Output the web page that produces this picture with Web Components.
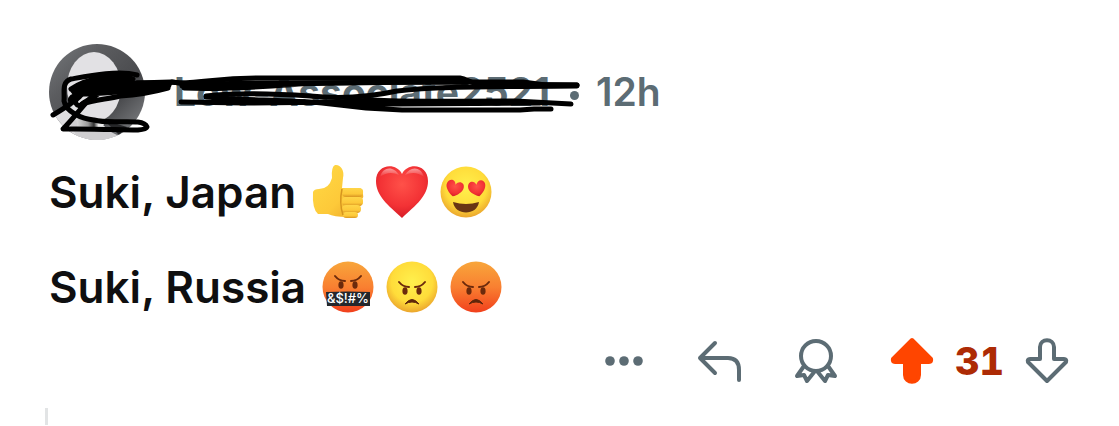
<!DOCTYPE html>
<html lang="en">
<head>
<meta charset="utf-8">
<title>Comment</title>
<style>
body { margin: 0; background: #fff; font-family: Inter, "Liberation Sans", sans-serif; color: #0f0f10; }
</style>
</head>
<body>
<comment-card></comment-card>

<template id="t-card">
<style>
:host { display: block; }
article { padding: 44px 50px 0 49px; }
.body { display: flex; flex-direction: column; gap: 39px; margin-top: 24px; }
.thread { width: 3px; height: 17px; margin: 20px 0 0 45px; background: #e2e4e5; }
</style>
<article>
  <comment-meta><span slot="name">Low-Associate2521</span><span slot="age">12h</span></comment-meta>
  <div class="body">
    <comment-line>Suki, Japan <emoji-icon slot="emoji" kind="thumb"></emoji-icon><emoji-icon slot="emoji" kind="heart"></emoji-icon><emoji-icon slot="emoji" kind="love"></emoji-icon></comment-line>
    <comment-line>Suki, Russia <emoji-icon slot="emoji" kind="curse"></emoji-icon><emoji-icon slot="emoji" kind="angry"></emoji-icon><emoji-icon slot="emoji" kind="rage"></emoji-icon></comment-line>
  </div>
  <comment-actions>31</comment-actions>
</article>
<div class="thread"></div>
</template>

<template id="t-meta">
<style>
:host { display: flex; align-items: center; position: relative; height: 96px; font-size: 39px; line-height: 44px; font-weight: 600; color: #5c6c74; white-space: nowrap; }
.avatar { width: 96px; height: 96px; flex: none; margin-right: 29px; }
a { color: inherit; text-decoration: none; font-weight: 700; }
.dot { width: 9px; height: 9px; border-radius: 50%; background: currentColor; margin: 6px 17px 0 20px; }
.scribble { position: absolute; left: 0; top: 0; width: 540px; height: 96px; overflow: visible; pointer-events: none; }
</style>
<svg class="avatar" viewBox="0 0 96 96" aria-hidden="true">
  <defs>
    <clipPath id="c"><circle cx="48" cy="48" r="48"/></clipPath>
    <linearGradient id="g" x1="0" y1="0" x2="1" y2="1"><stop offset="0" stop-color="#77797c"/><stop offset=".3" stop-color="#5b5c5f"/><stop offset=".65" stop-color="#48494c"/><stop offset="1" stop-color="#8d8f92"/></linearGradient>
    <linearGradient id="s" x1="0" y1="0" x2="1" y2="0"><stop offset="0" stop-color="#ddd"/><stop offset=".4" stop-color="#999"/><stop offset=".6" stop-color="#333"/><stop offset=".75" stop-color="#eee"/></linearGradient>
  </defs>
  <g clip-path="url(#c)">
    <rect width="96" height="96" fill="url(#g)"/>
    <path d="M0 73 20 60 34 74 53 80 70 96H0z" fill="#dedddf"/>
    <ellipse cx="45" cy="43" rx="27" ry="35" fill="#e2e1e4"/>
    <path d="M19 77Q40 73 54 84L70 92 63 96H30z" fill="#cfced0"/>
    <path d="M27 74Q44 80 57 77L52 85H29z" fill="url(#s)"/>
    <path d="M55 76 78 83 70 91z" fill="#252628"/>
  </g>
</svg>
<a href="#user"><slot name="name"></slot></a>
<span class="dot"></span>
<slot name="age"></slot>
<svg class="scribble" viewBox="49 44 540 96" fill="none" stroke="#000" stroke-width="5" stroke-linecap="round" stroke-linejoin="round" aria-hidden="true">
  <path d="M53 115C80 99 85 91 72 97C67 102 74 104 82 94C98 83 117 84 137 83L170 83"/>
  <path d="M137 75C118 70 88 76 71 79C61 82 65 94 64 101C66 112 82 119 94 120C112 125 143 117 147 127C145 133 116 128 63 129C76 116 90 96 101 88"/>
  <path d="M71 89C88 77 118 74 133 79C111 80 80 84 73 91C76 98 110 91 143 91C160 89 170 88 169 84C145 87 111 88 89 88C75 89 80 82 96 86C109 92 94 95 82 104C78 109 71 101 80 95C91 88 103 84 124 85"/>
  <path d="M82 104C94 100 108 99 120 96C136 95 150 93 168 88M75 94C85 85 91 86 101 83C117 80 127 86 143 86"/>
  <path d="M137 83 171 82 180 83C210 82 218 78 260 78L460 78C467 79 470 83 478 84L577 85"/>
  <path d="M182 86C205 92 239 84 280 84L415 82 523 82 545 85 577 85M184 88C234 90 263 86 305 84"/>
  <path d="M172 82C190 85 215 84 250 83L468 82M206 96C240 92 283 94 310 96C338 99 365 98 397 91C439 86 490 87 577 86"/>
  <path d="M206 97C240 100 283 100 322 103L366 108 402 110 520 110 534 109 551 109M181 102 245 103 340 102 373 100C402 102 445 101 515 101L571 104M337 103 400 104 540 103"/>
</svg>
</template>

<template id="t-line">
<style>
:host { display: flex; align-items: center; font-size: 44px; line-height: 56px; font-weight: 600; }
p { margin: 0; white-space: pre; }
.emoji { display: flex; gap: 12px; margin-left: 5px; }
</style>
<p><slot></slot></p><div class="emoji"><slot name="emoji"></slot></div>
</template>

<template id="t-actions">
<style>
:host { display: flex; justify-content: flex-end; align-items: center; margin-top: 19px; height: 54px; color: #5c6c74; }
button { display: block; border: 0; padding: 0; background: none; color: inherit; cursor: pointer; }
svg { display: block; width: 46px; height: 48px; fill: none; stroke: currentColor; stroke-width: 4; stroke-linecap: round; stroke-linejoin: round; }
.tools { display: flex; gap: 50px; margin-right: 50px; }
.votes { display: flex; align-items: center; gap: 20px; margin-right: -1px; }
.score { font-size: 38px; line-height: 44px; font-weight: 800; color: #ad2b05; font-variant-numeric: tabular-nums; }
.up { color: #ff4500; }
</style>
<div class="tools">
  <button aria-label="More"><svg viewBox="0 0 46 48"><g fill="currentColor" stroke="none"><circle cx="9" cy="24" r="4.8"/><circle cx="23" cy="24" r="4.8"/><circle cx="37" cy="24" r="4.8"/></g></svg></button>
  <button aria-label="Reply"><svg viewBox="0 0 46 48"><path d="M18 6 3 21 18 36M3 21H31Q42 21 42 33V43"/></svg></button>
  <button aria-label="Award"><svg viewBox="0 0 46 48"><circle cx="23" cy="19" r="15"/><path d="M11 29 4 39 11 38 14 44 22 34M35 29 42 39 35 38 32 44 24 34"/></svg></button>
</div>
<div class="votes">
  <button class="up" aria-label="Upvote"><svg viewBox="0 0 46 48"><path fill="currentColor" d="M23 3 4 22Q3 25 6 25H16V38C16 47 30 47 30 38V25H40Q43 25 42 22Z"/></svg></button>
  <span class="score"><slot></slot></span>
  <button aria-label="Downvote"><svg viewBox="0 0 46 48"><path d="M23 44 4 25Q3 22 6 22H16V10C16 1 30 1 30 10V22H40Q43 22 42 25Z"/></svg></button>
</div>
</template>

<script>
const defs = `<defs>
<radialGradient id="yr" cx=".5" cy=".4" r=".62"><stop offset="0" stop-color="#fff04d"/><stop offset=".65" stop-color="#ffdc3a"/><stop offset="1" stop-color="#e9a02c"/></radialGradient>
<linearGradient id="o" x1="0" y1="0" x2="0" y2="1"><stop offset="0" stop-color="#f8a63b"/><stop offset=".5" stop-color="#f98031"/><stop offset="1" stop-color="#f1401c"/></linearGradient>
<radialGradient id="h" cx=".5" cy=".35" r=".7"><stop offset="0" stop-color="#ff5149"/><stop offset=".6" stop-color="#f33235"/><stop offset="1" stop-color="#cf1723"/></radialGradient>
<linearGradient id="hi" x1="0" y1="0" x2="0" y2="1"><stop offset="0" stop-color="#fff" stop-opacity=".5"/><stop offset="1" stop-color="#fff" stop-opacity="0"/></linearGradient>
<linearGradient id="t" x1="0" y1="0" x2="1" y2="1"><stop offset="0" stop-color="#ffda45"/><stop offset=".6" stop-color="#fdc939"/><stop offset="1" stop-color="#e9a227"/></linearGradient>
<linearGradient id="f" x1="0" y1="0" x2="0" y2="1"><stop offset="0" stop-color="#ffd548"/><stop offset=".65" stop-color="#fdc839"/><stop offset="1" stop-color="#d99522"/></linearGradient></defs>`;
const brows = y => `<g transform="translate(0 ${y})"><path d="M13 18Q17 23 23 23M39 18Q35 23 29 23" fill="none" stroke="#6b2a0c" stroke-width="2" stroke-linecap="round"/><ellipse cx="19" cy="27" rx="2.6" ry="3.8" fill="#6b2a0c"/><ellipse cx="33" cy="27" rx="2.6" ry="3.8" fill="#6b2a0c"/></g>`;
const frown = '<path d="M19 43Q26 34 33 43Q26 39 19 43Z" fill="#5f260b" stroke="#5f260b" stroke-linejoin="round"/>';
const face = fill => `<circle cx="26" cy="26" r="25.5" fill="url(#${fill})"/>`;
const eye = 'M0 7C-5 4-9 0-8-4C-7-9-1-9 0-4C2-9 8-8 8-3C8 1 4 5 0 7Z';
const art = {
  thumb: `<path d="M1 26Q2 23 7 23Q17 23 20 12Q19 1 23-1C28-2 33 4 31 12L30 22H46Q52 22 51 28Q52 31 50 33Q52 38 48 40Q49 45 45 47Q43 52 35 51Q22 51 16 48H6Q0 43 1 26Z" fill="url(#t)"/><g fill="url(#f)"><rect x="30" y="22" width="21" height="9" rx="4"/><rect x="30" y="31" width="21" height="9" rx="4"/><rect x="30" y="39" width="19" height="8" rx="4"/><rect x="31" y="46" width="15" height="6" rx="3"/></g><path d="M30 23Q27 37 31 49" fill="none" stroke="#d6951f" stroke-width="1.5"/>`,
  heart: '<path d="M26 52C12 39 0 30 0 15C0-2 20-4 26 8C32-4 52-2 52 15C52 30 40 39 26 52Z" fill="url(#h)"/><path d="M4 11C7 0 18 0 23 9Q13 4 4 11ZM48 11C45 0 34 0 29 9Q39 4 48 11Z" fill="url(#hi)"/>',
  love: face('yr') + `<g fill="url(#h)"><path transform="translate(14.5 23) rotate(14) scale(1.08)" d="${eye}"/><path transform="translate(37.5 23) rotate(-14) scale(1.08)" d="${eye}"/></g><path d="M13 36Q26 40 39 36C37 50 15 50 13 36Z" fill="#693614"/>`,
  curse: face('o') + brows(-3) + '<path d="M4 31Q26 30 48 31V45H5Z" fill="#24272c"/><text x="26" y="42" text-anchor="middle" font-family="Inter, sans-serif" font-size="13" font-weight="500" fill="#fff">&amp;$!#%</text>',
  angry: face('yr') + brows(3) + frown,
  rage: face('o') + brows(3) + frown
};
function define(name, id) {
  customElements.define(name, class extends HTMLElement {
    constructor() {
      super();
      this.attachShadow({ mode: 'open' }).append(document.getElementById(id).content.cloneNode(true));
    }
  });
}
customElements.define('emoji-icon', class extends HTMLElement {
  connectedCallback() {
    if (this.shadowRoot) return;
    this.attachShadow({ mode: 'open' }).innerHTML = `<style>:host{display:block}svg{display:block;width:52px;height:52px;overflow:visible}</style><svg viewBox="0 0 52 52" aria-hidden="true">${defs}${art[this.getAttribute('kind')]}</svg>`;
  }
});
define('comment-meta', 't-meta');
define('comment-line', 't-line');
define('comment-actions', 't-actions');
define('comment-card', 't-card');
</script>
</body>
</html>
